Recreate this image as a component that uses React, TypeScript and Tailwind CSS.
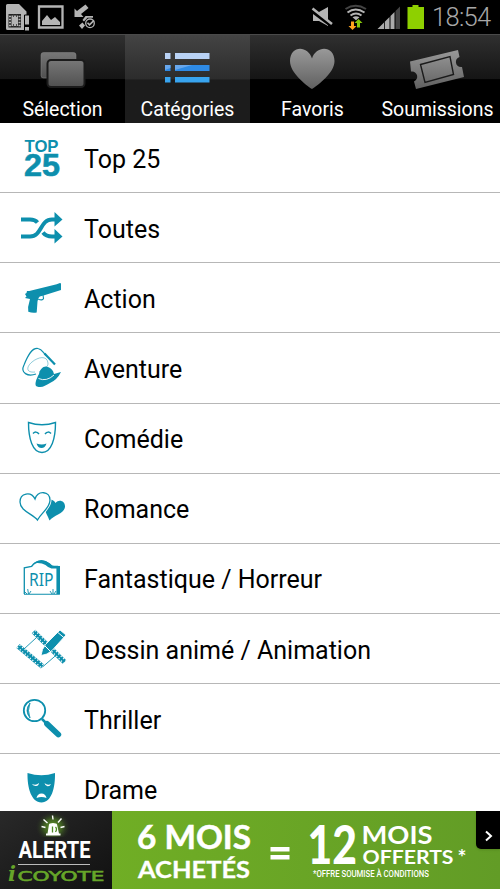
import type { ReactNode } from "react";

const teal = "#0d8fad";

function StatusBar() {
  return (
    <div className="flex h-[34px] shrink-0 items-center justify-between bg-black">
      <svg width="100" height="34" viewBox="0 0 100 34" fill="#b4b4b4">
        <path d="M7.500 4H19l7.500 7.500v3h-2V30H7.500a1.500 1.500 0 0 1-1.500-1.500v-23A1.500 1.500 0 0 1 7.500 4z" />
        <path d="M8.500 14h12.500v13.500H8.500z" fill="#222" />
        <path d="M11.500 15.500h6.500v10.500h-6.500z" />
        <path d="M9 16.500h2M9 19.500h2M9 22.500h2M9 25.500h2M18.500 16.500h2M18.500 19.500h2M18.500 22.500h2M18.500 25.500h2" stroke="#b4b4b4" strokeWidth="1.300" />
        <path d="M13.500 14v3M16.500 14v3M13.500 24v3M16.500 24v3" stroke="#333" strokeWidth=".8" />
        <path d="M24 15h6v16h-6z" fill="#000" />
        <path d="M25 15.500h4v9h-4zM25 27h4v3.500h-4z" />
        <path d="M39 6.500h23.500v21H39z" fill="none" stroke="#b4b4b4" strokeWidth="2.300" />
        <path d="M42 25v-4l5-6 4 5 4-3 5 5v3z" />
        <path d="M85.500 4.500l3 3.500-7.500 6 2.500 3h-9V8.500l2.500 2.500z" />
        <path d="M79 25.500l3.500-3 2.500 3-3 3.500zM85.500 16h7.500v1.800h-5.500L84 21.500l-1.500-1.500z" />
        <circle cx="90" cy="23.300" r="4.300" fill="none" stroke="#b4b4b4" strokeWidth="1.300" />
        <path d="M87.500 22.700l2 2.200 4.500-4.500" fill="none" stroke="#b4b4b4" strokeWidth="1.600" />
      </svg>
      <div className="flex items-center">
        <svg width="120" height="34" viewBox="310 0 120 34">
          <path d="M313 12h6l9-5v19l-9-5h-6z" fill="#b4b4b4" />
          <path d="M311.500 10.500l20 15" stroke="#000" strokeWidth="4" />
          <path d="M312.500 8.500l19.500 15.500" stroke="#b4b4b4" strokeWidth="2.500" />
          <g fill="none" stroke="#b4b4b4" strokeWidth="2">
            <path d="M345.500 9q10-6.500 20.500 0" stroke="#444" />
            <path d="M347.500 12.500q8-6 17 0" />
            <path d="M350.500 15.500q5.500-4 11 0" />
          </g>
          <path d="M352.500 17.200q3.500-2 7 0l-3.500 3z" fill="#b4b4b4" />
          <path d="M351 21.500h3v4.500h2.500l-4 4-4-4h2.500z" fill="#ffa51e" />
          <path d="M358.500 19l4 4h-2.500v4.500h-3V23h-2.500z" fill="#86c90a" />
          <path d="M377.500 29L384 22.500V29zM384.800 21.800l4.700-4.700V29h-4.700zM390.500 16l4-4v17h-4z" fill="#aaa" />
          <path d="M395.500 11l4.500-4.500V29h-4.500z" fill="#444" />
          <path d="M407.500 7h5V5h6v2h5.500v22h-16.500z" fill="#8ed000" />
        </svg>
        <span className="w-[70px] pl-[2px] text-[25.500px] leading-[34px] font-light tracking-[-0.7px] text-[#a8a8a8]">18:54</span>
      </div>
    </div>
  );
}

function Tab({ label, active, children }: { label: string; active?: boolean; children: ReactNode }) {
  return (
    <div
      className={
        "flex w-[125px] flex-col items-center border-t border-[#4a4a4a] " +
        (active
          ? "bg-linear-to-b from-[#444444] from-0% via-[#2c2c2c] via-50% to-[#1c1c1c] to-51%"
          : "bg-linear-to-b from-[#303030] from-0% via-[#151515] via-50% to-black to-51%")
      }
    >
      <svg width="125" height="60" viewBox="0 35 125 60" className="shrink-0">
        {children}
      </svg>
      <span className="pt-px text-[19.500px] leading-[28px] whitespace-nowrap text-white">{label}</span>
    </div>
  );
}

function TabBar() {
  return (
    <div className="flex h-[89px] shrink-0 overflow-hidden bg-black">
      <svg width="0" height="0" className="absolute">
        <defs>
          <linearGradient id="gray" x1="0" y1="0" x2="0" y2="1">
            <stop offset="0" stopColor="#999" />
            <stop offset="1" stopColor="#606060" />
          </linearGradient>
          <linearGradient id="folder" x1="0" y1="0" x2="0" y2="1">
            <stop offset="0" stopColor="#777" />
            <stop offset="1" stopColor="#505050" />
          </linearGradient>
        </defs>
      </svg>
      <Tab label="Sélection">
        <rect x="41" y="52.500" width="35" height="25.500" rx="2.500" fill="url(#folder)" stroke="#888" strokeWidth=".5" />
        <rect x="47.500" y="60" width="37" height="27" rx="3.500" fill="url(#folder)" stroke="#1b1b1b" strokeWidth="2" />
      </Tab>
      <Tab label="Catégories" active>
        <path d="M40 53h5.500v6H40zM50 53h34.500v6H50z" fill="#b9d2f5" />
        <path d="M40 65h5.500v6H40zM50 65h34.500v6H50z" fill="#2e8ae5" />
        <path d="M40 65h5.500v3L40 70zM50 65h17l-17 5z" fill="#68a7ec" />
        <path d="M40 77h5.500v5.500H40zM50 77h34.500v5.500H50z" fill="#38a4ef" />
      </Tab>
      <Tab label="Favoris">
        <path d="M62 89C56 85 40 73 40 61c0-16 18-16 22-2.500C66 45 84.500 45 84.500 61 84.500 73 68 85 62 89z" fill="url(#gray)" />
      </Tab>
      <Tab label="Soumissions">
        <path d="M35 61.500L83 50l1.500 7c-6 2-4 11 2.500 10l2 10-48 12-2-7.500c6-3 3-11-3-10z" fill="url(#gray)" />
        <path d="M45.500 64.500L75 56.500l3.500 18-28.500 8z" fill="none" stroke="#1b1b1b" strokeWidth="1.400" />
      </Tab>
    </div>
  );
}

const rows: { label: string; icon: ReactNode }[] = [
  {
    label: "Top 25",
    icon: (
      <g fontFamily="Liberation Sans, sans-serif" fontWeight="bold" fill={teal}>
        <text x="24.500" y="28.700" fontSize="16.500" textLength="34" lengthAdjust="spacingAndGlyphs">TOP</text>
        <text x="24" y="53" fontSize="31.500" stroke={teal} strokeWidth=".6" textLength="36" lengthAdjust="spacingAndGlyphs">25</text>
      </g>
    ),
  },
  {
    label: "Toutes",
    icon: (
      <>
        <path d="M21 26.500h9q5 0 7.500 3M21 43.500h9c12 0 10-17 22-17h3M43 39.500q3 4 9 4h3" fill="none" stroke={teal} strokeWidth="4" />
        <path d="M54.500 19l8 7.500-8 7zM54.500 36l8 7.500-8 7z" fill={teal} />
      </>
    ),
  },
  {
    label: "Action",
    icon: (
      <>
        <path d="M25 31l1.500-1 .5-2h2.300L56.700 21.300 60 20l1 .5v6.500L44.300 32.300l-4.500 1.200q-1.800 1-2.300 5L36.700 49.500q-4.200.8-8.400-.7l-.2-4.800 1.900-8-5-1 1.500-1.500z" fill={teal} />
        <path d="M38 36q4.500 2 5.500-.5l-.5-3.500" fill="none" stroke={teal} strokeWidth="1.100" />
      </>
    ),
  },
  {
    label: "Aventure",
    icon: (
      <>
        <path d="M36 41c-8 3-16-1-12-9 4-10 8-17.500 14-16.500 4 .5 5 4 8 7" fill="none" stroke={teal} strokeWidth="1.200" />
        <path d="M35 39c-9 1-9-5-3-10s15-7 16 1c.5 4-5 7-9 9" fill="none" stroke={teal} strokeWidth=".7" opacity=".65" />
        <path d="M44.500 20.500l10.500 11" stroke={teal} strokeWidth="2.200" />
        <path d="M39 41c1-5 5-9 9-7 3 1 5 3 6 7l7-2q-4 8-11 11c-5 3-8 5-13 3.500-3-1-1-7 2-12.500z" fill={teal} />
        <path d="M38.500 45.500q8 3.500 15.500-3.500" fill="none" stroke="#fff" strokeWidth=".9" />
      </>
    ),
  },
  {
    label: "Comédie",
    icon: (
      <>
        <path d="M28.500 19.500q13.500 4.500 27 0c0 16-4 30-13.500 30s-13.500-14-13.500-30z" fill="none" stroke={teal} strokeWidth="1.400" />
        <path d="M33 30.500q3-3 6 .5M45 31q3-3.500 6-.5" fill="none" stroke={teal} strokeWidth="1.500" />
        <path d="M36.500 40.500q5.500 2 10 0-1.500 4.500-5 4.500t-5-4.500z" fill={teal} />
      </>
    ),
  },
  {
    label: "Romance",
    icon: (
      <>
        <path d="M49.500 47.500C47 41 43 36 45 30.500 46.500 25 53.500 25.500 55.500 30 59 25.500 65.500 28 65 34 64 41 54 42 49.500 47.500z" fill={teal} />
        <path d="M37.500 47C33 41 20 38 20 29c0-9 11-11 15-3 3-9 15-8 15 1 0 8-8 12-12.500 20z" fill="#fff" stroke="#fff" strokeWidth="3" />
        <path d="M37.500 47C33 41 20 38 20 29c0-9 11-11 15-3 3-9 15-8 15 1 0 8-8 12-12.500 20z" fill="none" stroke={teal} strokeWidth="1.300" />
      </>
    ),
  },
  {
    label: "Fantastique / Horreur",
    icon: (
      <>
        <path d="M24.300 51V24.800l7.200-1.300c5-7 14-7 20 0h6V51" fill="none" stroke={teal} strokeWidth="1.300" />
        <path d="M33 20.500q8.500-7 17 0 2.500 2.500 4 2.500h6v28.500h-3.500V25.500h-5q-3-.5-6-3.500-5-3-12.500-1.500zM24 50.800h33l3 1H24z" fill={teal} />
        <path d="M28.500 51l-.8-5M27 51l-3-3M29 51l2-3M53 51v-5M52 51l-2-3M54 51l2-3" stroke={teal} strokeWidth=".9" />
        <text x="29" y="42.800" fontFamily="Noto Sans, sans-serif" fontSize="17.500" fill={teal} textLength="24.500" lengthAdjust="spacingAndGlyphs">RIP</text>
      </>
    ),
  },
  {
    label: "Dessin animé / Animation",
    icon: (
      <>
        <path d="M36 24L24 35M57.500 40L42.500 53" stroke={teal} strokeWidth=".9" />
        <path d="M33.500 17.500l31 30.500M18 32l24.500 20.500" stroke={teal} strokeWidth="5" />
        <path d="M32.800 18.800l31 30.500M34.800 16.400l31 30.500M17.200 33.300l24 20.200M19.500 31l24 20" stroke="#fff" strokeWidth="1.200" strokeDasharray="1.300 2" />
        <path d="M60 16l6 5L52 36.500l-5 3.500-6 1.500 1.500-6 3-5z" fill={teal} stroke="#fff" strokeWidth=".9" />
        <path d="M57.800 18.500l6 5" stroke="#fff" strokeWidth="1" />
        <path d="M45 32l5.500 5.500" stroke="#fff" strokeWidth="1" />
      </>
    ),
  },
  {
    label: "Thriller",
    icon: (
      <>
        <circle cx="34.500" cy="26.500" r="10.700" fill="none" stroke={teal} strokeWidth="1.800" />
        <path d="M30 19q-6 7.500 0 15-3-7.500 0-15z" fill={teal} stroke={teal} strokeWidth=".8" />
        <path d="M42 35l4 4" stroke={teal} strokeWidth="2.500" />
        <path d="M47 39.800L58.300 50.500" stroke={teal} strokeWidth="5.800" strokeLinecap="round" />
      </>
    ),
  },
  {
    label: "Drame",
    icon: (
      <>
        <path d="M27.500 19q14 4.500 27.500 0c.3 15-3.500 29.500-13.500 29.500S27.200 34 27.500 19z" fill={teal} />
        <path d="M32 30q4 2 7-1-.5 3.500-3.500 3T32 30zM44.500 29q3 3 6.500 1-1 2.500-3.500 2.200t-3-3.200zM36.500 44q1-4.500 5-4.500t5 4.500q-5-2-10 0z" fill="#fff" />
      </>
    ),
  },
];

function Banner() {
  return (
    <div className="flex h-[78px] shrink-0 overflow-hidden bg-linear-to-r from-[#74b324] to-[#629c26] text-white">
      <div className="flex w-[112px] shrink-0 flex-col items-center bg-linear-to-br from-[#292929] to-[#111]">
        <svg width="112" height="26" viewBox="0 0 112 26" className="shrink-0">
          <defs>
            <radialGradient id="glow">
              <stop offset="0" stopColor="#6ca62b" />
              <stop offset=".5" stopColor="#4f7f24" stopOpacity=".65" />
              <stop offset="1" stopColor="#222" stopOpacity="0" />
            </radialGradient>
          </defs>
          <ellipse cx="53" cy="16" rx="18" ry="16" fill="url(#glow)" />
          <path d="M47.500 22.500l1.500-9q.5-1.500 4-1.500t4 1.500l2 9h1.500V24.500H46v-2z" fill="#fff" />
          <path d="M52.500 15.500v6M55.500 16q2 2 0 5" fill="none" stroke="#4f8a24" strokeWidth="1.300" />
          <path d="M41.500 15.500l4 1M43.500 8.500l4 3.500M52.500 4.500l.5 4M61.500 7.500l-3.500 4M64.500 15.500l-4 1" stroke="#fff" strokeWidth="1.400" />
        </svg>
        <svg width="112" height="52" viewBox="0 26 112 52" className="shrink-0">
          <text x="18.500" y="47.300" fontFamily="Roboto, sans-serif" fontWeight="bold" fontSize="23" fill="#fff" textLength="72" lengthAdjust="spacingAndGlyphs">ALERTE</text>
          <path d="M18 53.500h72" stroke="#bbb" strokeWidth="1" />
          <text x="8" y="69.500" fontFamily="DejaVu Serif, serif" fontStyle="italic" fontWeight="bold" fontSize="21" fill="#66a529">i</text>
          <text x="17.500" y="69.500" fontFamily="DejaVu Sans, sans-serif" fontSize="14" fill="#66a529" stroke="#66a529" strokeWidth=".6" textLength="87" lengthAdjust="spacingAndGlyphs">COYOTE</text>
        </svg>
      </div>
      <svg width="364" height="78" viewBox="112 0 364 78" className="shrink-0" fill="#fff" fontFamily="Lato, sans-serif" fontWeight="bold">
        <text x="137" y="37.500" fontSize="31.500" stroke="#fff" strokeWidth=".5" textLength="114" lengthAdjust="spacingAndGlyphs">6 MOIS</text>
        <text x="138" y="66.500" fontSize="23.500" stroke="#fff" strokeWidth=".3" textLength="112" lengthAdjust="spacingAndGlyphs">ACHETÉS</text>
        <path d="M270.500 36h19v4.500h-19zM270.500 44h19v4.500h-19z" />
        <text x="307.500" y="53.300" fontSize="53" fontWeight="900" textLength="49.500" lengthAdjust="spacingAndGlyphs">12</text>
        <text x="361.500" y="33" fontSize="24" textLength="71" lengthAdjust="spacingAndGlyphs">MOIS</text>
        <text x="362.500" y="53.300" fontSize="19.500" textLength="91" lengthAdjust="spacingAndGlyphs">OFFERTS</text>
        <text x="457.500" y="54" fontSize="21">*</text>
        <text x="313" y="65.500" fontFamily="Roboto, sans-serif" fontSize="9" fontWeight="500" textLength="116" lengthAdjust="spacingAndGlyphs">*OFFRE SOUMISE À CONDITIONS</text>
      </svg>
      <div className="flex h-[38px] w-6 items-center justify-center rounded-bl-[5px] bg-black shadow">
        <svg width="24" height="38" viewBox="0 0 24 38">
          <path d="M10 20.500l5 4.500-5 4.500" fill="none" stroke="#fff" strokeWidth="2" />
        </svg>
      </div>
    </div>
  );
}

export default function App() {
  return (
    <div className="flex h-[889px] w-[500px] flex-col overflow-hidden bg-white font-['Roboto',sans-serif]">
      <StatusBar />
      <TabBar />
      <div className="h-[688px] shrink-0 overflow-hidden">
        {rows.map((row) => (
          <div key={row.label} className="flex h-[70.15px] items-center border-b border-[#b7b7b7]">
            <svg width="84" height="70" viewBox="0 0 84 70" className="shrink-0">
              {row.icon}
            </svg>
            <span className="pt-[4px] text-[25px] leading-[30px] whitespace-nowrap text-black">{row.label}</span>
          </div>
        ))}
      </div>
      <Banner />
    </div>
  );
}
